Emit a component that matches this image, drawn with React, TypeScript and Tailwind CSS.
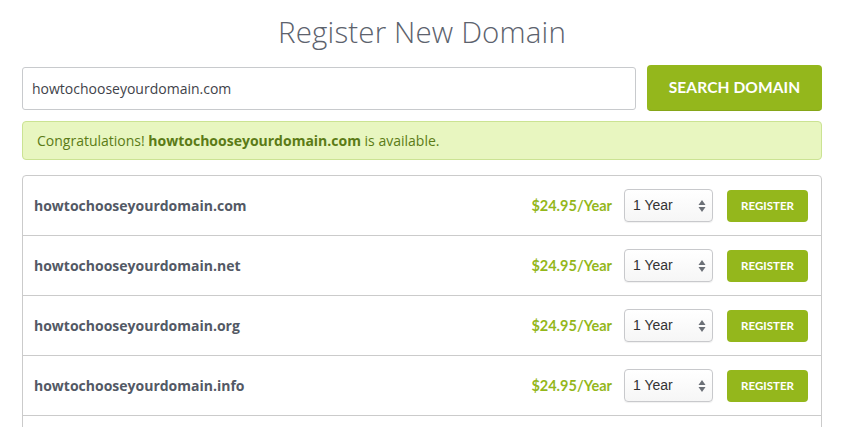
import React from "react";

const domains = [
  "howtochooseyourdomain.com",
  "howtochooseyourdomain.net",
  "howtochooseyourdomain.org",
  "howtochooseyourdomain.info",
];

function Arrows() {
  return (
    <svg width="8" height="14" viewBox="0 0 8 14" className="shrink-0">
      <path d="M4 1 L7.5 6 L0.5 6 Z" fill="#6b6f76" />
      <path d="M4 13 L7.5 8 L0.5 8 Z" fill="#6b6f76" />
    </svg>
  );
}

export default function App() {
  return (
    <div className="w-[841px] h-[427px] overflow-hidden bg-white" style={{ fontFamily: '"Open Sans", sans-serif' }}>
      <div className="ml-[22px] w-[800px] flex flex-col">
        <h1 className="text-center text-[29.5px] leading-[40px] font-light text-[#5c626d] mt-[12px] tracking-[0.15px]">
          Register New Domain
        </h1>
        <div className="flex items-center gap-[11px] mt-[13px]">
          <div className="flex-1 h-[43px] border border-[#c8cacd] rounded-[3px] flex items-center pl-[9px] text-[14px] text-[#3f434a]">
            howtochooseyourdomain.com
          </div>
          <button
            className="w-[175px] h-[46px] rounded-[4px] bg-[#94b71c] text-white text-[15.5px] font-bold tracking-[0.1px] flex items-center justify-center border-b border-[#86a618]"
            style={{ fontFamily: "Lato, sans-serif" }}
          >
            SEARCH DOMAIN
          </button>
        </div>
        <div className="mt-[10px] h-[39px] rounded-[4px] bg-[#e8f6c0] border border-[#cbe393] flex items-center pl-[14px] text-[14px] text-[#5b7b16]">
          Congratulations!&nbsp;<span className="font-bold">howtochooseyourdomain.com</span>&nbsp;is available.
        </div>
        <div className="mt-[15px] border border-[#cbcbcb] rounded-t-[4px] flex flex-col">
          {domains.map((d) => (
            <div key={d} className="h-[60px] border-b border-[#cbcbcb] flex items-center pl-[11px] pr-[13px]">
              <div className="flex-1 text-[14px] font-bold text-[#535965]">{d}</div>
              <div
                className="text-[14.5px] font-bold text-[#94b71c]"
                style={{ fontFamily: "Lato, sans-serif" }}
              >
                $24.95/Year
              </div>
              <div
                className="ml-[12px] w-[89px] h-[33px] border border-[#c8c9cc] rounded-[4px] bg-gradient-to-b from-white to-[#f6f6f6] flex items-center justify-between pl-[8px] pr-[6px] text-[14px] text-[#333] shadow-[0_1px_1px_rgba(0,0,0,0.06)]"
                style={{ fontFamily: '"Liberation Sans", Arial, sans-serif' }}
              >
                <span>1 Year</span>
                <Arrows />
              </div>
              <button
                className="ml-[14px] w-[81px] h-[32px] rounded-[4px] bg-[#94b71c] text-white text-[11.5px] font-bold flex items-center justify-center tracking-[0px]"
                style={{ fontFamily: "Lato, sans-serif" }}
              >
                REGISTER
              </button>
            </div>
          ))}
          <div className="h-[20px]" />
        </div>
      </div>
    </div>
  );
}
